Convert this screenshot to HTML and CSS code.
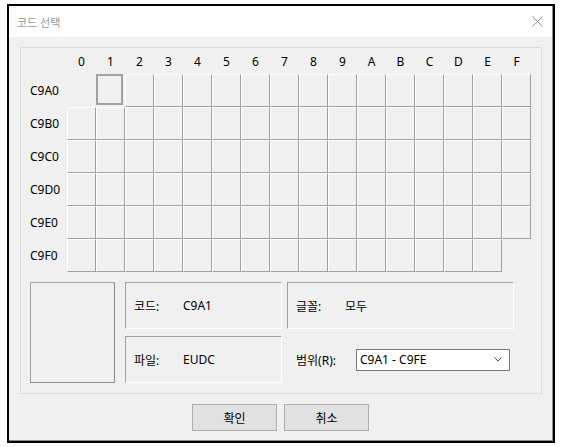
FILE: index.html
```html
<!DOCTYPE html>
<html lang="ko">
<head>
    <meta charset="UTF-8">
    <title>코드 선택</title>
    <link rel="stylesheet" href="styles.css">
</head>
<body>
    <div class="window">
        <div class="frame">
            <div class="titlebar">
                <span class="title">코드 선택</span>
                <svg class="close" width="11" height="11" viewBox="0 0 11 11">
                    <path d="M0.5 0.5 L10.5 10.5 M10.5 0.5 L0.5 10.5" stroke="#8a8a8a" stroke-width="1" fill="none"/>
                </svg>
            </div>

            <div class="client">
                <div class="group">
                    <!-- code grid -->
                    <div class="grid">
                        <div></div>
                        <div class="colhead">0</div><div class="colhead">1</div><div class="colhead">2</div><div class="colhead">3</div>
                        <div class="colhead">4</div><div class="colhead">5</div><div class="colhead">6</div><div class="colhead">7</div>
                        <div class="colhead">8</div><div class="colhead">9</div><div class="colhead">A</div><div class="colhead">B</div>
                        <div class="colhead">C</div><div class="colhead">D</div><div class="colhead">E</div><div class="colhead">F</div>

                        <div class="rowhead">C9A0</div>
                        <div></div><div class="cell sel"></div>
                        <div class="cell"></div><div class="cell"></div><div class="cell"></div><div class="cell"></div><div class="cell"></div><div class="cell"></div><div class="cell"></div>
                        <div class="cell"></div><div class="cell"></div><div class="cell"></div><div class="cell"></div><div class="cell"></div><div class="cell"></div><div class="cell"></div>

                        <div class="rowhead">C9B0</div>
                        <div class="cell"></div><div class="cell"></div><div class="cell"></div><div class="cell"></div><div class="cell"></div><div class="cell"></div><div class="cell"></div><div class="cell"></div>
                        <div class="cell"></div><div class="cell"></div><div class="cell"></div><div class="cell"></div><div class="cell"></div><div class="cell"></div><div class="cell"></div><div class="cell"></div>

                        <div class="rowhead">C9C0</div>
                        <div class="cell"></div><div class="cell"></div><div class="cell"></div><div class="cell"></div><div class="cell"></div><div class="cell"></div><div class="cell"></div><div class="cell"></div>
                        <div class="cell"></div><div class="cell"></div><div class="cell"></div><div class="cell"></div><div class="cell"></div><div class="cell"></div><div class="cell"></div><div class="cell"></div>

                        <div class="rowhead">C9D0</div>
                        <div class="cell"></div><div class="cell"></div><div class="cell"></div><div class="cell"></div><div class="cell"></div><div class="cell"></div><div class="cell"></div><div class="cell"></div>
                        <div class="cell"></div><div class="cell"></div><div class="cell"></div><div class="cell"></div><div class="cell"></div><div class="cell"></div><div class="cell"></div><div class="cell"></div>

                        <div class="rowhead">C9E0</div>
                        <div class="cell"></div><div class="cell"></div><div class="cell"></div><div class="cell"></div><div class="cell"></div><div class="cell"></div><div class="cell"></div><div class="cell"></div>
                        <div class="cell"></div><div class="cell"></div><div class="cell"></div><div class="cell"></div><div class="cell"></div><div class="cell"></div><div class="cell"></div><div class="cell"></div>

                        <div class="rowhead">C9F0</div>
                        <div class="cell"></div><div class="cell"></div><div class="cell"></div><div class="cell"></div><div class="cell"></div><div class="cell"></div><div class="cell"></div><div class="cell"></div>
                        <div class="cell"></div><div class="cell"></div><div class="cell"></div><div class="cell"></div><div class="cell"></div><div class="cell"></div><div class="cell"></div>
                    </div>

                    <!-- preview and info -->
                    <div class="details">
                        <div class="preview"></div>
                        <div class="fields">
                            <div class="field"><span class="label">코드:</span><span>C9A1</span></div>
                            <div class="field"><span class="label">글꼴:</span><span>모두</span></div>
                            <div class="field"><span class="label">파일:</span><span>EUDC</span></div>
                            <div class="field plain">
                                <span class="label wide">범위(R):</span>
                                <div class="combo">
                                    <span>C9A1 - C9FE</span>
                                    <svg width="8" height="5" viewBox="0 0 8 5">
                                        <path d="M0.5 0.5 L4 4 L7.5 0.5" stroke="#505050" stroke-width="1" fill="none"/>
                                    </svg>
                                </div>
                            </div>
                        </div>
                    </div>
                </div>

                <div class="buttons">
                    <button>확인</button>
                    <button>취소</button>
                </div>
            </div>
        </div>
    </div>
</body>
</html>
```

FILE: styles.css
```css
body {
    margin: 0;
    padding: 4px 0 0 7px;
    background: #fff;
    font-family: 'Noto Sans', 'Noto Sans CJK KR', sans-serif;
    font-size: 12px;
    color: #000;
}

.window {
    width: 548px;
    height: 439px;
    box-sizing: border-box;
    border: 2px solid #000;
}

.frame {
    height: 100%;
    box-sizing: border-box;
    border-right: 1px solid #8c8c8c;
    border-bottom: 1px solid #8c8c8c;
    display: flex;
    flex-direction: column;
}

.titlebar {
    height: 31px;
    background: #fff;
    display: flex;
    align-items: center;
    justify-content: space-between;
    padding: 0 9px 0 8px;
}

.title {
    color: #999;
    font-size: 11px;
}

.client {
    flex: 1;
    background: #f0f0f0;
    padding: 10px 0 0 11px;
}

.group {
    width: 522px;
    height: 347px;
    box-sizing: border-box;
    border: 1px solid #dcdcdc;
}

.grid {
    display: grid;
    grid-template-columns: 46px repeat(16, 29px);
    grid-template-rows: 26px repeat(6, 33px);
}

.colhead {
    display: flex;
    align-items: center;
    justify-content: center;
}

.rowhead {
    display: flex;
    align-items: center;
    padding-left: 9px;
}

.cell {
    box-sizing: border-box;
    border-top: 1px solid #fff;
    border-left: 1px solid #fff;
    border-right: 1px solid #a0a0a0;
    border-bottom: 1px solid #a0a0a0;
}

.cell.sel {
    width: 27px;
    height: 31px;
    border: 2px solid #a0a0a0;
}

.details {
    display: flex;
    gap: 10px;
    margin-top: 10px;
    padding-left: 9px;
}

.preview {
    width: 85px;
    height: 101px;
    box-sizing: border-box;
    border: 1px solid #a0a0a0;
    border-right-color: #8c8c8c;
    border-bottom-color: #8c8c8c;
}

.fields {
    display: grid;
    grid-template-columns: 157px 227px;
    grid-template-rows: 47px 47px;
    column-gap: 5px;
    row-gap: 7px;
}

.field {
    display: flex;
    align-items: center;
    box-sizing: border-box;
    padding-left: 8px;
    border-top: 1px solid #a0a0a0;
    border-left: 1px solid #a0a0a0;
    border-right: 1px solid #fff;
    border-bottom: 1px solid #fff;
}

.field.plain {
    border-color: transparent;
}

.label {
    width: 49px;
}

.label.wide {
    width: 60px;
}

.combo {
    width: 154px;
    height: 22px;
    box-sizing: border-box;
    border: 1px solid #7a7a7a;
    background: #fff;
    display: flex;
    align-items: center;
    justify-content: space-between;
    padding: 0 7px 0 3px;
}

.buttons {
    display: flex;
    justify-content: center;
    gap: 7px;
    margin-top: 10px;
    padding-right: 11px;
}

.buttons button {
    width: 85px;
    height: 27px;
    background: #e1e1e1;
    border: 1px solid #adadad;
    font-family: inherit;
    font-size: 12px;
    color: #000;
    padding: 0;
}
```
